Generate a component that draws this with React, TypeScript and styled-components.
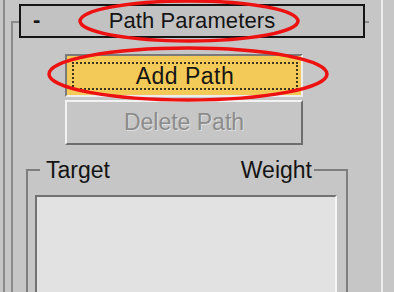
import React from 'react';
import styled, { createGlobalStyle } from 'styled-components';

const GlobalStyle = createGlobalStyle`
  html, body {
    margin: 0;
    padding: 0;
    background: #c6c6c6;
  }
  body {
    font-family: 'Liberation Sans', Arial, sans-serif;
  }
`;

export default function App() {
  return (
    <>
      <GlobalStyle />
      <Screen>
        <Panel>
          <Rollout>
            <Header>
              <Collapse>-</Collapse>
              <HeaderTitle>Path Parameters</HeaderTitle>
              <span />
            </Header>
            <ButtonStack>
              <CheckButton>
                <FocusRing>Add Path</FocusRing>
              </CheckButton>
              <PushButton disabled>Delete Path</PushButton>
            </ButtonStack>
            <Group>
              <Legend>
                <span>Target</span>
                <span>Weight</span>
              </Legend>
              <ListBox />
            </Group>
          </Rollout>
        </Panel>
        <Marks viewBox="0 0 394 292">
          <ellipse cx="189" cy="21" rx="109" ry="20" />
          <ellipse cx="188" cy="74" rx="139" ry="26" />
        </Marks>
      </Screen>
    </>
  );
}

const Screen = styled.div`
  position: relative;
  width: 394px;
  height: 292px;
  overflow: hidden;
  background: #c6c6c6;
  color: #141414;
  font-size: 23px;
`;

const Panel = styled.div`
  box-sizing: border-box;
  width: 380px;
  height: 100%;
  margin-left: 3px;
  padding: 21px 0 0 6px;
  border-left: 2px solid #8a8a8a;
  border-right: 2px solid #ececec;
`;

const Rollout = styled.div`
  box-sizing: border-box;
  width: 358px;
  height: 100%;
  border-top: 2px solid #8a8a8a;
  border-left: 2px solid #8a8a8a;
`;

const Header = styled.div`
  box-sizing: border-box;
  width: 346px;
  height: 34px;
  margin: -19px 0 0 6px;
  padding: 0 12px;
  border: 2px solid #151515;
  background: #c2c2c2;
  display: grid;
  grid-template-columns: 1fr auto 1fr;
  align-items: center;
  font-size: 22px;
`;

const Collapse = styled.span`
  font-weight: bold;
  line-height: 1;
  margin-top: -2px;
`;

const HeaderTitle = styled.span`
  letter-spacing: 0.1px;
`;

const ButtonStack = styled.div`
  display: flex;
  flex-direction: column;
  gap: 3px;
  margin: 16px 0 0 52px;
`;

const CheckButton = styled.div`
  box-sizing: border-box;
  width: 238px;
  height: 43px;
  padding: 6px 3px 5px 5px;
  border: 2px solid;
  border-color: #7a7a7a #eeeeee #eeeeee #7a7a7a;
  background: #f3c957;
`;

const FocusRing = styled.div`
  box-sizing: border-box;
  height: 100%;
  border: 2px dotted #3c3524;
  display: flex;
  align-items: center;
  justify-content: center;
  letter-spacing: 0.5px;
`;

const PushButton = styled.button`
  box-sizing: border-box;
  width: 238px;
  height: 45px;
  padding: 0;
  border: 2px solid;
  border-color: #f2f2f2 #6e6e6e #6e6e6e #f2f2f2;
  background: #c6c6c6;
  font: inherit;
  color: #8c8c8c;
  text-shadow: 1px 1px 0 rgba(255, 255, 255, 0.45);
`;

const Group = styled.fieldset`
  box-sizing: border-box;
  width: 322px;
  margin: 12px 0 0 13px;
  padding: 0;
  border: 2px solid #7e7e7e;
`;

const Legend = styled.legend`
  box-sizing: border-box;
  width: 274px;
  margin-left: 12px;
  padding: 0 2px 0 6px;
  line-height: 26px;
  display: flex;
  justify-content: space-between;
`;

const ListBox = styled.div`
  height: 120px;
  margin: 12px 9px 0 7px;
  border: 2px solid;
  border-color: #727272 #f6f6f6 #f6f6f6 #727272;
  background: #e2e2e2;
`;

const Marks = styled.svg`
  position: absolute;
  top: 0;
  left: 0;
  width: 394px;
  height: 292px;
  pointer-events: none;
  fill: none;
  stroke: #ee1111;
  stroke-width: 3.5;
`;
